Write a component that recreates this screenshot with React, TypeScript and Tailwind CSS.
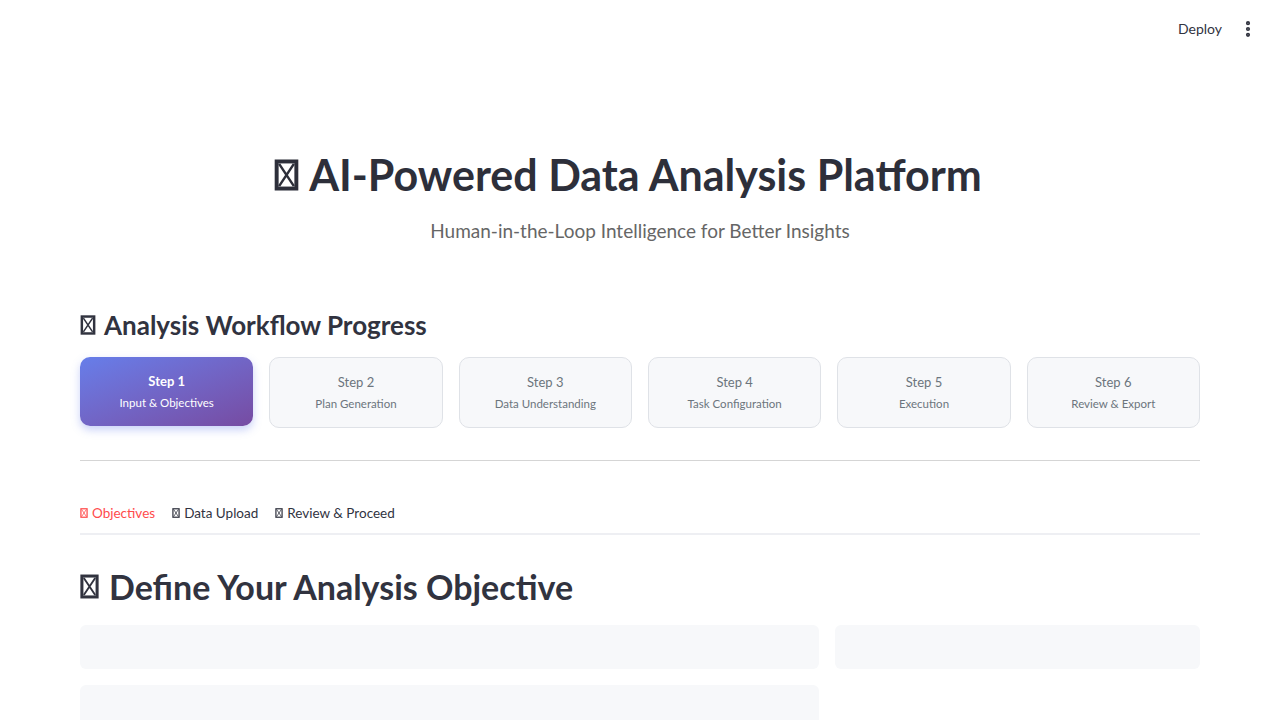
import { MoreVertical } from 'lucide-react'

const STEPS = [
    { n: 1, label: 'Input & Objectives' },
    { n: 2, label: 'Plan Generation' },
    { n: 3, label: 'Data Understanding' },
    { n: 4, label: 'Task Configuration' },
    { n: 5, label: 'Execution' },
    { n: 6, label: 'Review & Export' },
]

// missing-glyph box, the way the emoji render in the screenshot
function Tofu({ className }: { className?: string }) {
    return (
        <svg viewBox="0 0 10 13" className={className} fill="none" stroke="currentColor">
            <rect x="1" y="1" width="8" height="11" strokeWidth="1.6" />
            <path d="M2 2 L8 11 M8 2 L2 11" strokeWidth="1" />
        </svg>
    )
}

export default function App() {
    const font = { fontFamily: 'Lato, "Noto Sans", sans-serif' }
    return (
        <div className="min-h-screen bg-white text-[#31333f]" style={font}>
            <header className="h-[60px] flex items-start justify-end pt-[19px] pr-[22px] gap-[16px]">
                <span className="text-[14px] leading-[20px]">Deploy</span>
                <MoreVertical className="h-5 w-5" strokeWidth={3} />
            </header>

            <main className="px-[80px] pt-[88px]">
                <h1 className="flex items-center justify-center gap-[10px] pr-[24px] text-[43px] font-bold leading-[54px] text-[#2d2f3a]">
                    <Tofu className="w-[25px] h-[32px]" />
                    AI-Powered Data Analysis Platform
                </h1>
                <p className="mt-[15px] text-center text-[19px] text-[#666]">
                    Human-in-the-Loop Intelligence for Better Insights
                </p>

                <h3 className="mt-[61px] flex items-center gap-[8px] text-[26px] font-bold leading-[36px]">
                    <Tofu className="w-[16px] h-[20px]" />
                    Analysis Workflow Progress
                </h3>

                <div className="mt-[14px] grid grid-cols-6 gap-[16px]">
                    {STEPS.map(s =>
                        s.n === 1 ? (
                            <div
                                key={s.n}
                                className="h-[69px] rounded-[10px] bg-gradient-to-br from-[#667eea] to-[#764ba2] text-white flex flex-col items-center justify-center shadow-[0_4px_8px_rgba(102,126,234,0.35)]"
                            >
                                <div className="text-[13px] font-bold leading-[18px]">Step {s.n}</div>
                                <div className="mt-[5px] text-[11.5px] leading-[16px]">{s.label}</div>
                            </div>
                        ) : (
                            <div
                                key={s.n}
                                className="h-[71px] rounded-[10px] bg-[#f7f8fa] border border-[#dfe2e7] text-[#6c757d] flex flex-col items-center justify-center"
                            >
                                <div className="text-[13px] leading-[18px]">Step {s.n}</div>
                                <div className="mt-[5px] text-[11.5px] leading-[16px]">{s.label}</div>
                            </div>
                        )
                    )}
                </div>

                <hr className="mt-[32px] border-0 border-t border-[#d5d5d5]" />

                <div className="mt-[42px] flex gap-[17px] border-b-2 border-[#eeeff3] pb-[10px] text-[13.5px]">
                    <span className="flex items-center gap-[4px] text-[#ff4b4b]">
                        <Tofu className="w-[8px] h-[10px]" /> Objectives
                    </span>
                    <span className="flex items-center gap-[4px]">
                        <Tofu className="w-[8px] h-[10px]" /> Data Upload
                    </span>
                    <span className="flex items-center gap-[4px]">
                        <Tofu className="w-[8px] h-[10px]" /> Review &amp; Proceed
                    </span>
                </div>

                <h2 className="mt-[30px] flex items-center gap-[10px] text-[34px] font-bold leading-[44px]">
                    <Tofu className="w-[19px] h-[25px]" />
                    Define Your Analysis Objective
                </h2>

                <div className="mt-[16px] grid grid-cols-[739px_1fr] gap-x-[16px] gap-y-[16px]">
                    <div className="h-[44px] rounded-[6px] bg-[#f7f8fa]" />
                    <div className="h-[44px] rounded-[6px] bg-[#f7f8fa]" />
                    <div className="h-[60px] rounded-[6px] bg-[#f7f8fa]" />
                </div>
            </main>
        </div>
    )
}
